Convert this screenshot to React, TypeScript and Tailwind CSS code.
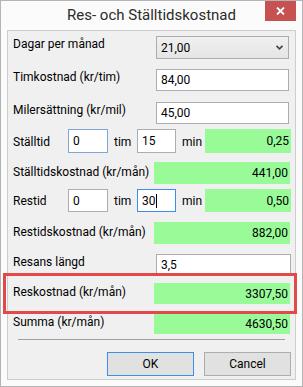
import React from 'react';

const font = "font-['Roboto',sans-serif]";

function Label({ text, mt = 0, w }: { text: string; mt?: number; w?: string }) {
  return (
    <div className={`${w ?? 'flex-1'} whitespace-nowrap text-[12px] leading-[16px] text-black`} style={{ marginTop: mt }}>
      {text}
    </div>
  );
}

function TextBox({ value, className = '', focused = false, hover = false, caret = false }: {
  value: string; className?: string; focused?: boolean; hover?: boolean; caret?: boolean;
}) {
  const border = focused ? 'border-[#3c8ee8]' : hover ? 'border-[#7ea6d8]' : 'border-[#abadb3]';
  return (
    <div className={`bg-white border ${border} flex items-center pl-[4px] text-[12px] text-black ${className}`}>
      <span>{value}</span>
      {caret && <span className="w-px h-[14px] bg-black" />}
    </div>
  );
}

function Green({ value, className = '' }: { value: string; className?: string }) {
  return (
    <div className={`bg-[#98fb98] flex items-center justify-end pr-[2px] text-[12px] text-black ${className}`}>
      {value}
    </div>
  );
}

export default function App() {
  return (
    <div className={`relative w-[303px] h-[387px] bg-[#fbfbfb] border border-[#b4b4b4] flex flex-col ${font}`}>
      {/* Title bar */}
      <div className="relative h-[29px] flex items-center justify-center">
        <span className="text-[15px] text-[#2b2b2b]">Res- och Ställtidskostnad</span>
        <button className="absolute top-0 right-[6px] w-[31px] h-[20px] bg-[#c75050] flex items-center justify-center">
          <svg width="9" height="8" viewBox="0 0 9 8">
            <path d="M1 0.5 L8 7.5 M8 0.5 L1 7.5" stroke="white" strokeWidth="1.8" />
          </svg>
        </button>
      </div>

      {/* Content */}
      <div className="mx-[6px] h-[350px] border border-[#cdcdcd] bg-[#f0f0f0] flex flex-col pl-[5px]">
        {/* Dagar per månad */}
        <div className="flex items-start mt-[5px] h-[23px]">
          <Label text="Dagar per månad" mt={0} />
          <div className="w-[133px] h-[23px] mr-[6px] border border-[#acacac] bg-gradient-to-b from-[#f0f0f0] to-[#e5e5e5] flex items-center justify-between pl-[4px] pr-[5px] text-[12px] text-black">
            <span>21,00</span>
            <svg width="7" height="5" viewBox="0 0 7 5">
              <path d="M0.5 0.8 L3.5 3.8 L6.5 0.8" stroke="#444" strokeWidth="1.6" fill="none" />
            </svg>
          </div>
        </div>

        {/* Timkostnad */}
        <div className="flex items-start mt-[10px] h-[22px]">
          <Label text="Timkostnad (kr/tim)" />
          <TextBox value="84,00" className="w-[133px] h-[22px] mr-[6px]" />
        </div>

        {/* Milersättning */}
        <div className="flex items-start mt-[11px] h-[22px]">
          <Label text="Milersättning (kr/mil)" />
          <TextBox value="45,00" className="w-[133px] h-[22px] mr-[6px]" />
        </div>

        {/* Ställtid */}
        <div className="flex items-start mt-[5px] h-[24px]">
          <Label text="Ställtid" mt={5} w="w-[55px]" />
          <TextBox value="0" hover className="w-[40px] h-[24px]" />
          <div className="w-[29px] pl-[6px] mt-[5px] text-[12px] leading-[16px]">tim</div>
          <TextBox value="15" className="w-[39px] h-[24px]" />
          <div className="w-[29px] pl-[6px] mt-[5px] text-[12px] leading-[16px]">min</div>
          <Green value="0,25" className="w-[86px] h-[24px]" />
        </div>

        {/* Ställtidskostnad */}
        <div className="flex items-start mt-[9px] h-[22px]">
          <Label text="Ställtidskostnad (kr/mån)" mt={2} />
          <Green value="441,00" className="w-[136px] h-[22px] mr-[5px]" />
        </div>

        {/* Restid */}
        <div className="flex items-start mt-[5px] h-[23px]">
          <Label text="Restid" mt={4} w="w-[55px]" />
          <TextBox value="0" className="w-[40px] h-[23px]" />
          <div className="w-[29px] pl-[6px] mt-[4px] text-[12px] leading-[16px]">tim</div>
          <TextBox value="30" focused caret className="w-[39px] h-[23px]" />
          <div className="w-[29px] pl-[6px] mt-[4px] text-[12px] leading-[16px]">min</div>
          <Green value="0,50" className="w-[86px] h-[23px]" />
        </div>

        {/* Restidskostnad */}
        <div className="flex items-start mt-[10px] h-[22px]">
          <Label text="Restidskostnad (kr/mån)" mt={2} />
          <Green value="882,00" className="w-[136px] h-[22px] mr-[5px]" />
        </div>

        {/* Resans längd */}
        <div className="flex items-start mt-[10px] h-[22px]">
          <Label text="Resans längd" />
          <TextBox value="3,5" className="w-[135px] h-[22px] mr-[4px]" />
        </div>

        {/* Reskostnad */}
        <div className="flex items-start mt-[7px] h-[21px]">
          <Label text="Reskostnad (kr/mån)" mt={1} />
          <Green value="3307,50" className="w-[136px] h-[21px] mr-[5px]" />
        </div>

        {/* Summa */}
        <div className="flex items-start mt-[9px] h-[21px]">
          <Label text="Summa (kr/mån)" mt={1} />
          <Green value="4630,50" className="w-[136px] h-[21px] mr-[5px]" />
        </div>

        {/* Separator */}
        <div className="mt-[5px] ml-[5px] mr-[10px] h-px bg-[#a0a0a0]" />

        {/* Buttons */}
        <div className="flex justify-end gap-[10px] mt-[12px] mr-[4px]">
          <button className="w-[87px] h-[24px] bg-[#e1e1e1] border border-[#3c8ee8] text-[12px] text-black">OK</button>
          <button className="w-[87px] h-[24px] bg-[#e1e1e1] border border-[#adadad] text-[12px] text-black">Cancel</button>
        </div>
      </div>

      {/* Highlight */}
      <div className="absolute left-[2px] top-[272px] w-[294px] h-[41px] border-[3px] border-[#e24a4a]" />
    </div>
  );
}
